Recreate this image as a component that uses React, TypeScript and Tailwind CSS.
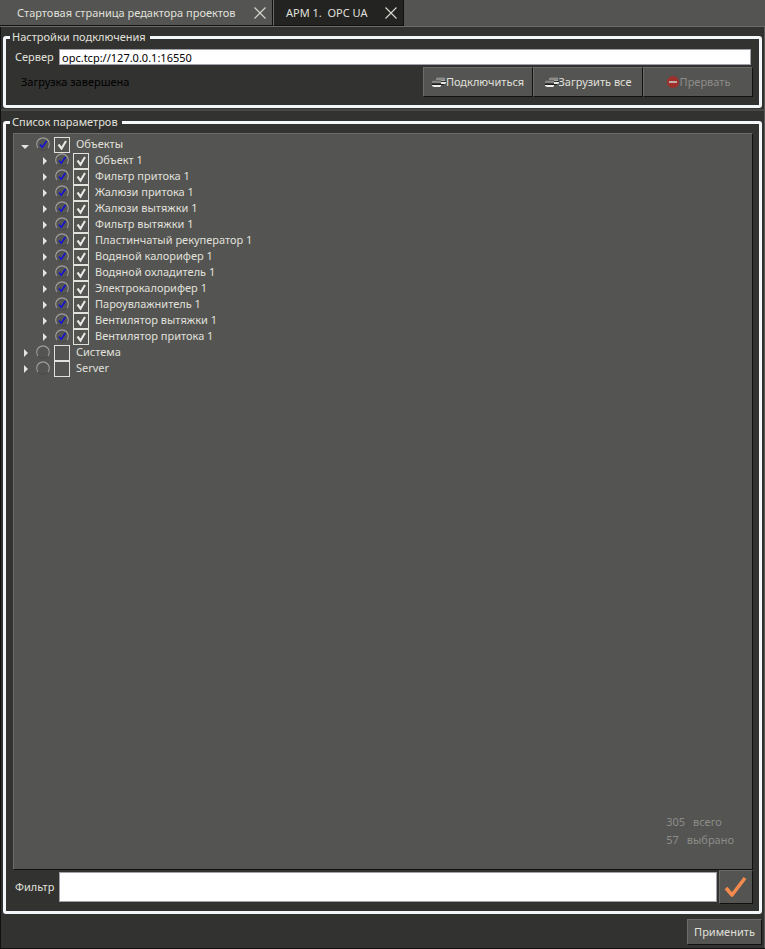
import { useState } from 'react';
import type { ReactNode } from 'react';

const children = [
  'Объект 1',
  'Фильтр притока 1',
  'Жалюзи притока 1',
  'Жалюзи вытяжки 1',
  'Фильтр вытяжки 1',
  'Пластинчатый рекуператор 1',
  'Водяной калорифер 1',
  'Водяной охладитель 1',
  'Электрокалорифер 1',
  'Пароувлажнитель 1',
  'Вентилятор вытяжки 1',
  'Вентилятор притока 1',
];

function CloseIcon() {
  return (
    <svg width="12" height="12" viewBox="0 0 12 12" fill="none" stroke="#d8d8d4" strokeWidth="1.1">
      <path d="M.5.5l11 11M11.5.5l-11 11" />
    </svg>
  );
}

function ServersIcon() {
  return (
    <svg width="14" height="14" viewBox="0 0 14 14" className="shrink-0">
      <path d="M5 2h8v1H5z" fill="#6c6c6a" />
      <path d="M4 3h9v2H4z" fill="#8a8a88" />
      <path d="M4 5h9v1H4z" fill="#a8a8a5" />
      <path d="M9 6h5v1H9z" fill="#2e2e2d" />
      <path d="M9 7h5v1l-1 1H9z" fill="#e6e6e2" />
      <path d="M1 5h8v1H1z" fill="#666664" />
      <path d="M0 6h9v2H0z" fill="#858583" />
      <path d="M0 8h9v1H0z" fill="#3a3a39" />
      <path d="M0 9h9v1H0z" fill="#1f1f1e" />
      <path d="M0 10h9v1l-1 1H2l-2-1z" fill="#f0f0ec" />
      <path d="M9 9h3v1H9z" fill="#222" />
    </svg>
  );
}

function StopIcon() {
  return (
    <svg width="14" height="14" viewBox="0 0 14 14" className="shrink-0">
      <circle cx="7" cy="7" r="5.8" fill="#9f2f2a" stroke="#8a3a34" />
      <rect x="3" y="6" width="8" height="2" fill="#c2aaa6" />
    </svg>
  );
}

function StateDial({ on }: { on: boolean }) {
  return (
    <svg width="16" height="16" viewBox="0 0 16 16" fill="none" className="shrink-0">
      <circle cx="8" cy="8" r="6.3" stroke="#494947" />
      <path d="M3 12a6.3 6.3 0 1 1 10 0" stroke="#a0a09d" strokeWidth="1.1" />
      {on && <path d="M5 8.5l2.2 2.7L11.5 5" stroke="#1212d8" strokeWidth="1.5" />}
    </svg>
  );
}

function TreeRow({ label, on, open = false, nested = false }: { label: string; on: boolean; open?: boolean; nested?: boolean }) {
  const [checked, setChecked] = useState(on);
  return (
    <li className={`flex h-4 items-center ${nested ? 'pl-[25px]' : 'pl-[6px]'}`}>
      <button type="button" aria-label={label} aria-expanded={open} className="mr-[3px] flex h-4 w-3 items-center justify-center">
        {open ? (
          <svg width="10" height="8" viewBox="0 0 10 8" className="mt-1.5"><path d="M0 2h8L4 6z" fill="#e4e4e0" /></svg>
        ) : (
          <svg width="8" height="8" viewBox="0 0 8 8" className="mt-0.5"><path d="M2 0v8l4-4z" fill="#e4e4e0" /></svg>
        )}
      </button>
      <StateDial on={on} />
      <label className="flex items-center">
        <span className="relative ml-[3px] mt-0.5 block size-4">
          <input type="checkbox" checked={checked} onChange={() => setChecked(!checked)} className="block size-4 appearance-none border border-[#e0e0dc]" />
          {checked && (
            <svg width="16" height="16" viewBox="0 0 16 16" fill="none" className="pointer-events-none absolute inset-0">
              <path d="M4.5 7.5l3 4L12 4" stroke="#e8e8e4" strokeWidth="2.1" />
            </svg>
          )}
        </span>
        <span className="ml-1.5 whitespace-nowrap leading-4">{label}</span>
      </label>
    </li>
  );
}

const raised = 'border border-t-[#6b6b69] border-l-[#6b6b69] border-r-[#111] border-b-[#111] bg-[#545452]';

function ToolButton({ icon, children: text, disabled = false }: { icon: ReactNode; children: string; disabled?: boolean }) {
  return (
    <button type="button" disabled={disabled} className={`flex h-[30px] w-[110px] items-center justify-center whitespace-nowrap disabled:text-[#8c8c89] ${raised}`}>
      {icon}
      {text}
    </button>
  );
}

const group = 'mx-0.5 min-w-0 rounded-[3px] border-3 border-[#f4f7fa] pr-1.5 pl-[7px]';
const legend = 'ml-[-3px] h-[17px] px-0.5 pr-1 leading-4';

export default function App() {
  return (
    <div className="flex h-screen min-h-[560px] flex-col border-b border-[#111] bg-[#323230] font-['Noto_Sans',sans-serif] text-[11px] text-[#e0e0dc]">
      <nav className="flex h-[27px] shrink-0 border-b border-[#6b6b69] bg-[#545452]">
        <div className="flex h-[26px] w-[273px] items-center justify-between border-r border-b border-[#111] pr-1.5 pl-[17px]">
          <a href="#start" className="whitespace-nowrap leading-4">Стартовая страница редактора проектов</a>
          <button type="button" aria-label="Закрыть"><CloseIcon /></button>
        </div>
        <div className="flex h-[26px] w-[131px] items-center justify-between border-r border-b border-l border-[#111] border-l-[#6b6b69] bg-[#232322] pr-1.5 pl-3">
          <a href="#opc" className="whitespace-pre leading-4">{'АРМ 1.  OPC UA'}</a>
          <button type="button" aria-label="Закрыть"><CloseIcon /></button>
        </div>
      </nav>

      <main className="flex min-h-0 flex-1 flex-col border-l border-r border-l-[#111] border-r-[#5b5b59] pt-0.5">
        <fieldset className={`${group} pb-2`}>
          <legend className={legend}>Настройки подключения</legend>
          <div className="flex items-center pt-[3px] pr-0.5 pl-0.5">
            <label htmlFor="server" className="w-11 leading-4">Сервер</label>
            <input id="server" defaultValue="opc.tcp://127.0.0.1:16550" className="h-4 min-w-0 flex-1 border border-[#a0a0a8] bg-white px-0.5 leading-[14px] text-black" />
          </div>
          <div className="flex items-center justify-between pt-0.5">
            <output className="pl-2 text-black">Загрузка завершена</output>
            <div className="flex">
              <ToolButton icon={<ServersIcon />}>Подключиться</ToolButton>
              <ToolButton icon={<ServersIcon />}>Загрузить все</ToolButton>
              <ToolButton icon={<StopIcon />} disabled>Прервать</ToolButton>
            </div>
          </div>
        </fieldset>

        <hr className="mt-px mb-[3px] border-t-2 border-[#484846]" />

        <div className="grid min-h-0 flex-1">
          <fieldset className={`${group} h-full pb-[7px]`}>
            <legend className={legend}>Список параметров</legend>
            <div className="flex h-full flex-col pt-0.5">
              <div className={`flex flex-1 flex-col justify-between pt-0.5 ${raised}`}>
                <ul>
                  <TreeRow label="Объекты" on open />
                  <li>
                    <ul>
                      {children.map((c) => <TreeRow key={c} label={c} on nested />)}
                    </ul>
                  </li>
                  <TreeRow label="Система" on={false} />
                  <TreeRow label="Server" on={false} />
                </ul>
                <dl className="mr-[18px] mb-5 self-end leading-[18px] text-[#8c8c89]">
                  <div className="flex gap-2"><dd>305</dd><dt>всего</dt></div>
                  <div className="flex gap-2"><dd>57</dd><dt>выбрано</dt></div>
                </dl>
              </div>
              <div className="flex items-center">
                <label htmlFor="filter" className="ml-0.5 w-11 leading-4">Фильтр</label>
                <input id="filter" className="h-[30px] min-w-0 flex-1 border border-[#a0a0a8] bg-white px-1 text-black" />
                <button type="button" aria-label="Применить фильтр" className={`ml-0.5 flex size-[34px] items-center justify-center ${raised}`}>
                  <svg width="24" height="24" viewBox="0 0 24 24" fill="none">
                    <path d="M2 13l6 7L21 3" stroke="#f58a4f" strokeWidth="3.6" strokeLinejoin="round" />
                  </svg>
                </button>
              </div>
            </div>
          </fieldset>
        </div>

        <div className="flex justify-end pt-[5px] pr-0.5 pb-[3px]">
          <button type="button" className={`h-[26px] min-w-[75px] px-1.5 ${raised}`}>Применить</button>
        </div>
      </main>
    </div>
  );
}
